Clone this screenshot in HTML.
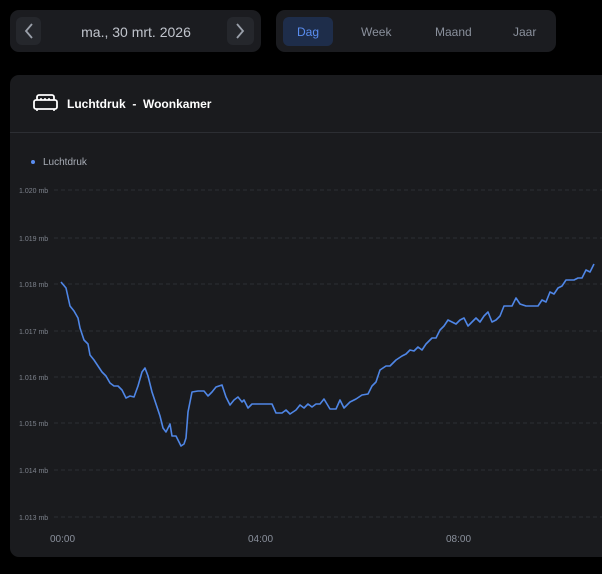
<!DOCTYPE html>
<html><head><meta charset="utf-8"><style>
*{margin:0;padding:0;box-sizing:border-box}
body{width:602px;height:574px;background:#000;font-family:"Liberation Sans",sans-serif;position:relative;overflow:hidden}
.box{position:absolute;background:#1b1c20;border-radius:9px}
.btn{position:absolute;background:#25272c;border-radius:6px}
.t{position:absolute;color:#8a909c;font-size:12px}
</style></head><body>
<div class="box" style="left:10px;top:10px;width:251px;height:42px"></div>
<div class="btn" style="left:16px;top:17px;width:25px;height:28px"></div>
<div class="btn" style="left:227px;top:17px;width:27px;height:28px"></div>
<svg style="position:absolute;left:16px;top:17px" width="238" height="28"><path d="M16 7 L10 14 L16 21" stroke="#9aa0aa" stroke-width="1.8" fill="none"/><path d="M221 7 L227 14 L221 21" stroke="#9aa0aa" stroke-width="1.8" fill="none"/></svg>
<div style="position:absolute;left:68px;top:24px;width:136px;text-align:center;color:#c0c4cc;font-size:14px">ma., 30 mrt. 2026</div>
<div class="box" style="left:276px;top:10px;width:280px;height:42px"></div>
<div style="position:absolute;left:283px;top:17px;width:50px;height:29px;background:#1e2d4a;border-radius:6px"></div>
<div class="t" style="left:297px;top:25px;color:#5a8df0">Dag</div>
<div class="t" style="left:361px;top:25px">Week</div>
<div class="t" style="left:435px;top:25px">Maand</div>
<div class="t" style="left:513px;top:25px">Jaar</div>
<div class="box" style="left:10px;top:75px;width:610px;height:482px;background:#1a1b1e"></div>
<div style="position:absolute;left:10px;top:132px;width:592px;height:1px;background:#2c2e33"></div>
<svg style="position:absolute;left:33px;top:94px" width="26" height="18"><rect x="4" y="1" width="17" height="10" rx="2" stroke="#fff" stroke-width="1.8" fill="none"/><rect x="1" y="6" width="23" height="9" rx="2" stroke="#fff" stroke-width="1.8" fill="#1a1b1e"/><path d="M7 5h2M11 5h2M15 5h2" stroke="#fff" stroke-width="1.4"/><path d="M4 15v2M21 15v2" stroke="#fff" stroke-width="1.6"/></svg>
<div style="position:absolute;left:67px;top:97px;color:#fff;font-size:12px;font-weight:bold">Luchtdruk &nbsp;- &nbsp;Woonkamer</div>
<div style="position:absolute;left:31px;top:160px;width:4px;height:4px;border-radius:2px;background:#5a8df0"></div>
<div style="position:absolute;left:43px;top:157px;color:#a8adb6;font-size:10px">Luchtdruk</div>
<svg style="position:absolute;left:0;top:0" width="602" height="574">
<g stroke="#2c2f34" stroke-dasharray="4 3" stroke-width="1">
<path d="M54 190H602M54 238H602M54 284H602M54 331H602M54 377H602M54 423H602M54 470H602M54 517H602"/></g>
<g fill="#7d828c" font-size="7" font-family="Liberation Sans">
<text x="19" y="193">1.020 mb</text><text x="19" y="241">1.019 mb</text><text x="19" y="287">1.018 mb</text><text x="19" y="334">1.017 mb</text><text x="19" y="380">1.016 mb</text><text x="19" y="426">1.015 mb</text><text x="19" y="473">1.014 mb</text><text x="19" y="520">1.013 mb</text></g>
<g fill="#8a909c" font-size="10" font-family="Liberation Sans"><text x="50" y="542">00:00</text><text x="248" y="542">04:00</text><text x="446" y="542">08:00</text></g>
<polyline fill="none" stroke="#4f86e6" stroke-width="1.6" stroke-linejoin="round" points="61,282 66,288 70,306 74,311 78,318 80,328 84,340 88,344 90,355 94,360 98,366 102,372 106,376 110,383 114,386 118,386 122,390 126,398 130,396 134,397 138,386 142,372 145,368 148,376 152,392 156,404 160,416 163,428 166,432 170,424 172,436 176,436 178,440 181,446 184,444 186,438 188,412 192,392 198,391 204,391 208,396 212,392 216,387 222,385 226,397 230,405 234,400 238,397 242,402 244,400 248,408 252,404 262,404 272,404 276,413 282,413 286,410 290,414 296,410 300,405 304,408 308,404 312,407 316,404 320,404 324,399 330,409 336,409 340,400 344,408 350,402 356,399 362,395 368,394 372,386 376,382 380,370 386,366 390,366 396,360 402,356 406,354 410,350 414,351 418,347 422,350 426,344 432,338 436,338 440,330 444,326 448,320 452,322 456,324 460,320 464,318 468,326 472,322 476,318 480,322 484,316 488,312 492,322 496,320 500,316 504,306 508,306 512,306 516,298 520,304 526,306 532,306 538,306 542,300 546,302 550,292 554,294 558,288 562,286 566,280 570,280 574,280 578,278 582,278 586,270 590,272 594,264"/>
</svg>
</body></html>
